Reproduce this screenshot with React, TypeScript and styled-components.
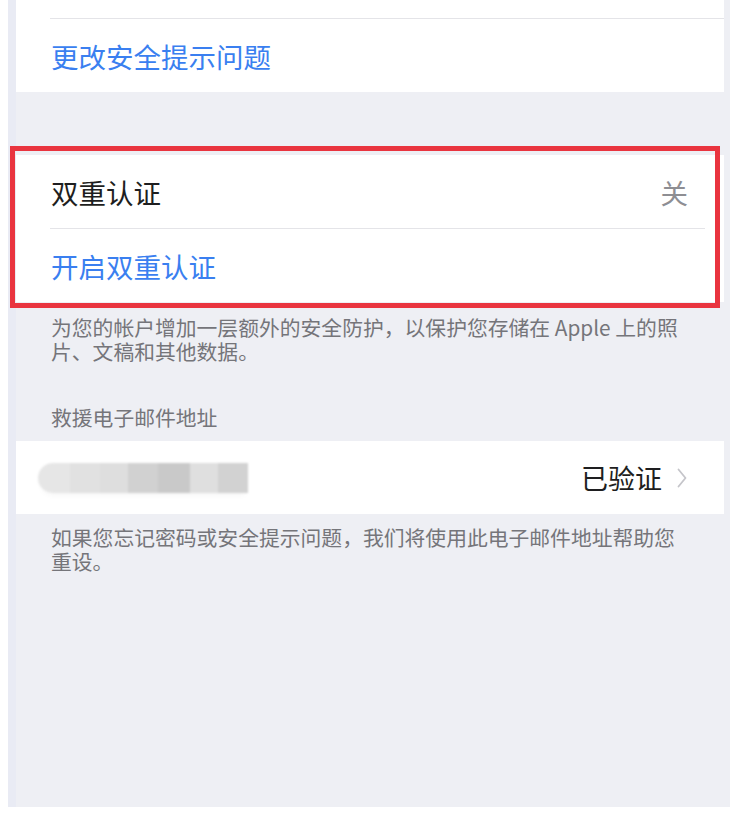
import React from "react";
import styled, { createGlobalStyle } from "styled-components";

const GlobalStyle = createGlobalStyle`
    html, body {
        margin: 0;
        padding: 0;
        background: #ffffff;
    }

    body {
        font-family: "Noto Sans CJK SC", "Noto Sans", sans-serif;
        -webkit-font-smoothing: antialiased;
    }
`;

const App = () => {
    return (
        <>
            <GlobalStyle />
            <Page>
                <Screen>
                    <Card>
                        <Row $height={18} />
                        <Separator />
                        <Row>
                            <Label $tone="blue">更改安全提示问题</Label>
                        </Row>
                    </Card>

                    <Highlighted>
                        <Card>
                            <Row>
                                <Label>双重认证</Label>
                                <Value>关</Value>
                            </Row>
                            <Separator $insetRight={19} />
                            <Row>
                                <Label $tone="blue">开启双重认证</Label>
                            </Row>
                        </Card>
                        <RedFrame />
                    </Highlighted>

                    <Footer>
                        为您的帐户增加一层额外的安全防护，以保护您存储在 Apple 上的照片、文稿和其他数据。
                    </Footer>

                    <SectionHeader>救援电子邮件地址</SectionHeader>

                    <Card>
                        <EmailRow>
                            <Redacted />
                            <Status>已验证</Status>
                            <Chevron width="10" height="20" viewBox="0 0 10 20">
                                <path d="M1.5 1.5 L8.5 10 L1.5 18.5" />
                            </Chevron>
                        </EmailRow>
                    </Card>

                    <Footer $top={11}>
                        如果您忘记密码或安全提示问题，我们将使用此电子邮件地址帮助您重设。
                    </Footer>
                </Screen>
            </Page>
        </>
    );
};

export default App;

const Page = styled.div`
    width: 734px;
    height: 814px;
    background: #ffffff;
    overflow: hidden;
`;

const Screen = styled.div`
    margin-left: 8px;
    width: 722px;
    height: 807px;

    display: flex;
    flex-direction: column;

    background: #eeeff4;
    box-shadow: inset 8px 0 0 #e9ebf4;
`;

const Card = styled.div`
    margin: 0 6px 0 8px;
    background: #ffffff;

    display: flex;
    flex-direction: column;
`;

const Row = styled.div<{ $height?: number }>`
    height: ${(props) => props.$height ?? 73}px;
    padding: 0 36px 0 35px;

    display: flex;
    align-items: center;
    justify-content: space-between;
`;

const Separator = styled.div<{ $insetRight?: number }>`
    height: 1px;
    margin: 0 ${(props) => props.$insetRight ?? 0}px 0 34px;
    background: #e4e4e8;
`;

const Label = styled.span<{ $tone?: "blue" | "dark" }>`
    font-size: 27.5px;
    line-height: 32px;
    color: ${(props) => (props.$tone === "blue" ? "#3a7ff0" : "#1e1e20")};
`;

const Value = styled.span`
    font-size: 27.5px;
    line-height: 32px;
    color: #8e8e93;
`;

const Highlighted = styled.div`
    position: relative;
    margin-top: 63px;
`;

const RedFrame = styled.div`
    position: absolute;
    top: -9px;
    left: 2px;
    right: 10px;
    bottom: -6px;

    border: 5px solid #e9343f;
    pointer-events: none;
`;

const Footer = styled.p<{ $top?: number }>`
    margin: 0;
    padding: ${(props) => props.$top ?? 13}px 42px 0 43px;

    font-size: 20.8px;
    line-height: 24px;
    color: #75757a;
`;

const SectionHeader = styled.p`
    margin: 42px 0 12px;
    padding: 0 42px 0 43px;

    font-size: 20.8px;
    line-height: 24px;
    color: #75757a;
`;

const EmailRow = styled.div`
    height: 73px;
    padding: 0 37px 0 22px;

    display: flex;
    align-items: center;
`;

const Redacted = styled.div`
    width: 210px;
    height: 30px;
    margin-right: auto;

    border-radius: 15px 0 0 15px;
    background: linear-gradient(
        to right,
        #e6e6e6 0 32px,
        #e1e1e1 32px 62px,
        #dedede 62px 90px,
        #d1d1d1 90px 120px,
        #c9c9c9 120px 152px,
        #dfdfdf 152px 180px,
        #d2d2d2 180px 210px
    );
    box-shadow: 0 5px 6px -3px rgba(0, 0, 0, 0.04);
    filter: blur(0.8px);
`;

const Status = styled.span`
    font-size: 27px;
    line-height: 32px;
    color: #1e1e20;
`;

const Chevron = styled.svg`
    margin-left: 15px;
    fill: none;
    stroke: #c5c5ca;
    stroke-width: 1.8;
    stroke-linecap: round;
    stroke-linejoin: round;
`;
